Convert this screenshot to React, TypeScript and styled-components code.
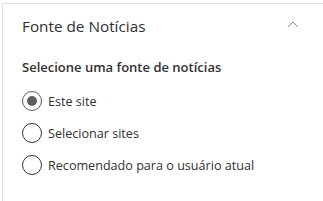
import React, { useState } from 'react'
import styled, { createGlobalStyle } from 'styled-components'

const Global = createGlobalStyle`
  body {
    margin: 0;
    background: #fff;
    font-family: 'Open Sans', 'Noto Sans', sans-serif;
    color: #323130;
  }
`

const Panel = styled.section`
  margin: 3px 0 0 2px;
  height: 198px;
  border-top: 1px solid #e1dfdd;
  border-left: 1px solid #e1dfdd;
  box-sizing: border-box;
  padding: 0 0 0 19px;
`

const Header = styled.div`
  display: flex;
  align-items: center;
  justify-content: space-between;
  height: 43px;
  padding-right: 24px;
`

const Title = styled.h2`
  margin: 0;
  font-size: 15.3px;
  font-weight: 400;
  color: #323130;
`

const Chevron = styled.svg`
  width: 12px;
  height: 8px;
  margin-top: -4px;
`

const Label = styled.div`
  margin-top: 11px;
  font-size: 13px;
  font-weight: 600;
  color: #323130;
`

const Options = styled.div`
  display: flex;
  flex-direction: column;
  gap: 12px;
  margin-top: 15px;
`

const Option = styled.label`
  display: flex;
  align-items: center;
  gap: 6px;
  font-size: 12.6px;
  height: 20px;
  cursor: pointer;
`

const Circle = styled.span<{ checked: boolean }>`
  width: 20px;
  height: 20px;
  border-radius: 50%;
  border: 1px solid ${({ checked }) => (checked ? '#605e5c' : '#323130')};
  box-sizing: border-box;
  display: flex;
  align-items: center;
  justify-content: center;
  &::after {
    content: '';
    width: 10px;
    height: 10px;
    border-radius: 50%;
    background: #605e5c;
    display: ${({ checked }) => (checked ? 'block' : 'none')};
  }
`

const options = ['Este site', 'Selecionar sites', 'Recomendado para o usuário atual']

const App = () => {
  const [selected, setSelected] = useState(0)
  return (
    <>
      <Global />
      <Panel>
        <Header>
          <Title>Fonte de Notícias</Title>
          <Chevron viewBox='0 0 12 8'>
            <path d='M1 7 L6 2 L11 7' fill='none' stroke='#8a8886' strokeWidth='1' />
          </Chevron>
        </Header>
        <Label>Selecione uma fonte de notícias</Label>
        <Options>
          {options.map((o, i) => (
            <Option key={o} onClick={() => setSelected(i)}>
              <Circle checked={selected === i} />
              {o}
            </Option>
          ))}
        </Options>
      </Panel>
    </>
  )
}

export default App
